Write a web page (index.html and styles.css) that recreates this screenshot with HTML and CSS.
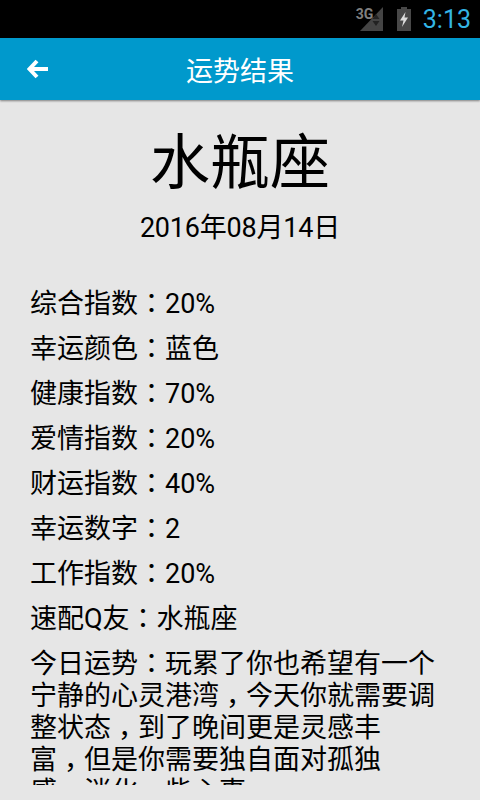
FILE: index.html
```html
<!DOCTYPE html>
<html>

<head>
	<meta charset="utf-8">
	<title>运势结果</title>
	<link rel="stylesheet" href="styles.css">
</head>

<body>
	<div class="status-bar">
		<div class="network">
			<span class="network-label">3G</span>
			<svg width="24" height="24" viewBox="0 0 24 24">
				<path d="M23 0V24H0Z" fill="#444"/>
				<path d="M16 7l3.500 5h-7ZM16 19l3.500-5h-7Z" fill="#222"/>
			</svg>
		</div>
		<svg class="battery" width="14" height="24" viewBox="0 0 14 24">
			<path d="M4 0H10V2H14V24H0V2H4Z" fill="#484848"/>
			<path d="M8.500 5L3 13.500H6.500L5 20L11 10.500H7.500Z" fill="#ddd"/>
		</svg>
		<span class="clock">3:13</span>
	</div>

	<div class="action-bar">
		<svg class="back" width="22" height="20" viewBox="0 0 22 20">
			<path d="M10 2L2.500 10L10 18M3 10H21" fill="none" stroke="#fff" stroke-width="4"/>
		</svg>
		<h1 class="action-title">运势结果</h1>
	</div>

	<div class="content">
		<div class="sign">水瓶座</div>
		<div class="date">2016年08月14日</div>

		<div class="rows">
			<div class="row">综合指数<span class="colon">：</span>20%</div>
			<div class="row">幸运颜色<span class="colon">：</span>蓝色</div>
			<div class="row">健康指数<span class="colon">：</span>70%</div>
			<div class="row">爱情指数<span class="colon">：</span>20%</div>
			<div class="row">财运指数<span class="colon">：</span>40%</div>
			<div class="row">幸运数字<span class="colon">：</span>2</div>
			<div class="row">工作指数<span class="colon">：</span>20%</div>
			<div class="row">速配Q友<span class="colon">：</span>水瓶座</div>
			<div class="summary">今日运势<span class="colon">：</span>玩累了你也希望有一个<br>宁静的心灵港湾<span class="comma">，</span>今天你就需要调<br>整状态<span class="comma">，</span>到了晚间更是灵感丰<br>富<span class="comma">，</span>但是你需要独自面对孤独<br>感<span class="comma">，</span>消化一些心事</div>
		</div>
	</div>
</body>

</html>
```
FILE: styles.css
```css
html, body {
	margin: 0;
	padding: 0;
}

body {
	width: 480px;
	height: 800px;
	overflow: hidden;
	background-color: #e6e6e6;
	font-family: Roboto, "Noto Sans CJK SC", sans-serif;
	color: #000;
}

.status-bar {
	height: 38px;
	background-color: #000;
	display: flex;
	align-items: center;
	justify-content: flex-end;
	padding-right: 9px;
	box-sizing: border-box;
}

.network {
	display: flex;
	position: relative;
	margin-right: 13px;
}

.network-label {
	position: absolute;
	left: -4px;
	top: 0;
	font-size: 14px;
	line-height: 15px;
	font-weight: bold;
	color: #808080;
}

.battery {
	margin-right: 12px;
}

.clock {
	font-size: 25px;
	color: #33b5e5;
}

.action-bar {
	height: 62px;
	background-color: #0099cc;
	box-shadow: 0 1px 2px rgba(0, 0, 0, 0.45);
	display: grid;
	grid-template-columns: 1fr auto 1fr;
	align-items: center;
}

.back {
	margin-left: 27px;
}

.action-title {
	margin: 0;
	font-size: 27px;
	font-weight: normal;
	color: #fff;
}

.content {
	padding: 0 30px;
}

.sign {
	margin-top: 26px;
	text-align: center;
	font-size: 60px;
	line-height: 76px;
}

.date {
	margin-top: 9px;
	text-align: center;
	font-size: 27px;
	line-height: 34px;
	letter-spacing: -0.2px;
}

.rows {
	margin-top: 37px;
}

.row {
	font-size: 27px;
	line-height: 45px;
}

.colon {
	font-family: "Noto Sans CJK TC", sans-serif;
	line-height: 0;
}

.comma {
	margin-left: 7px;
	margin-right: -7px;
}

.summary {
	font-size: 27px;
	line-height: 32px;
	height: 137px;
	overflow: hidden;
	margin-top: 6px;
}
```
